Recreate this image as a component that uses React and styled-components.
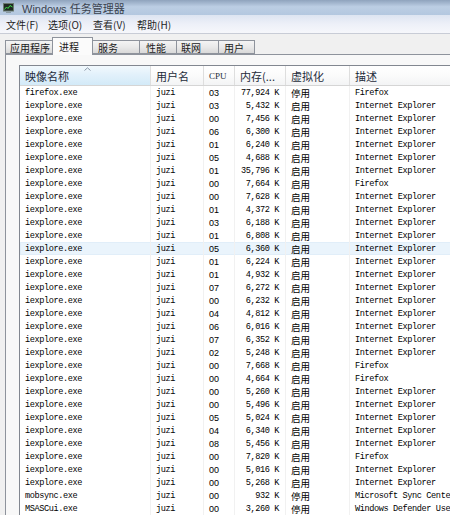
import styled, { createGlobalStyle } from "styled-components"

const Global = createGlobalStyle`
  html, body { margin: 0; padding: 0; overflow: hidden; background: #f0f0f0; }
`

const COLS = "131px 53px 31px 51px 64px 170px"

const Ventana = styled.div`
  width: 450px;
  height: 515px;
  overflow: hidden;
  background: #f0f0f0;
  display: flex;
  flex-direction: column;
  font-family: "Liberation Sans", "Noto Sans CJK SC", sans-serif;
`

const TitleBar = styled.div`
  height: 15px;
  flex: none;
  display: flex;
  align-items: center;
  gap: 8px;
  padding-left: 3px;
  background: linear-gradient(180deg, #8fa3bd 0%, #bccee4 45%, #b3c7df 100%);
`

const Titulo = styled.span`
  font-size: 11px;
  color: #3a424e;
  white-space: nowrap;
  font-family: "Liberation Sans", "Noto Sans CJK SC", sans-serif;
`

const MenuBar = styled.div`
  height: 18px;
  flex: none;
  display: flex;
  align-items: center;
  padding-left: 6px;
  background: linear-gradient(180deg, #dde4f1 0%, #edf0f8 50%, #f6f7fb 100%);
  border-bottom: 1px solid #c8ccd6;
`

const MenuItem = styled.span`
  width: ${p => p.w}px;
  flex: none;
  white-space: nowrap;
  font-size: 10px;
  color: #1e1e1e;
  font-family: "Noto Sans CJK SC", sans-serif;
`

const TabStrip = styled.div`
  height: 20px;
  flex: none;
  display: flex;
  align-items: flex-end;
  padding-left: 6px;
  position: relative;
  z-index: 1;
`

const Tab = styled.div`
  width: ${p => p.w}px;
  height: ${p => (p.sel ? 18 : 14)}px;
  margin-bottom: ${p => (p.sel ? -1 : 0)}px;
  box-sizing: border-box;
  padding-left: ${p => p.pl}px;
  display: flex;
  align-items: center;
  white-space: nowrap;
  overflow: hidden;
  font-size: 10px;
  font-family: "Noto Sans CJK SC", sans-serif;
  color: #1a1a1a;
  border: 1px solid #8e939c;
  border-bottom: ${p => (p.sel ? "none" : "1px solid #8e939c")};
  margin-left: -1px;
  background: ${p =>
    p.sel ? "#fbfbfb" : "linear-gradient(180deg, #f4f4f4 0%, #e9e9e9 50%, #d9d9d9 100%)"};
`

const Panel = styled.div`
  flex: 1;
  margin-left: 5px;
  border-top: 1px solid #8e939c;
  border-left: 1px solid #8e939c;
  background: #f8f8f8;
  padding: 10px 0 0 13px;
  overflow: hidden;
`

const Lista = styled.div`
  background: #ffffff;
  border-left: 1px solid #828790;
  border-top: 1px solid #828790;
  width: 520px;
  height: 600px;
`

const HeaderRow = styled.div`
  display: grid;
  grid-template-columns: ${COLS};
  height: 19px;
  border-bottom: 1px solid #d5d5d5;
`

const HeaderCell = styled.div`
  position: relative;
  display: flex;
  align-items: center;
  white-space: nowrap;
  justify-content: ${p => (p.right ? "flex-end" : "flex-start")};
  padding: ${p => (p.right ? "0 10px 0 0" : "0 0 0 5px")};
  font-size: ${p => (p.latin ? 9 : 11)}px;
  font-family: ${p =>
    p.latin ? `"Liberation Serif", serif` : `"Noto Sans CJK SC", sans-serif`};
  color: #1e2b3a;
  border-right: 1px solid #dedede;
  background: ${p =>
    p.sorted
      ? "linear-gradient(180deg, #f2f9fd 0%, #e2f1fb 45%, #d3eaf8 100%)"
      : "linear-gradient(180deg, #ffffff 0%, #fbfbfb 50%, #f3f4f5 100%)"};
`

const SortArrow = styled.svg`
  position: absolute;
  left: 64px;
  top: 1px;
`

const Row = styled.div`
  display: grid;
  grid-template-columns: ${COLS};
  height: 13px;
  background: ${p => (p.hot ? "#eaf4fc" : "#ffffff")};
  box-shadow: ${p => (p.hot ? "inset 0 0 0 1px #e1eef9" : "none")};
`

const Cell = styled.div`
  display: flex;
  align-items: center;
  overflow: hidden;
  white-space: nowrap;
  justify-content: ${p => (p.right ? "flex-end" : "flex-start")};
  padding: ${p => (p.right ? "0 6px 0 0" : "0 0 0 5px")};
  font-size: ${p => (p.cjk ? 9.5 : p.sans ? 9 : 8.6)}px;
  letter-spacing: ${p => (p.cjk || p.sans ? 0 : -0.4)}px;
  font-family: ${p =>
    p.cjk
      ? `"Noto Sans CJK SC", sans-serif`
      : p.sans
      ? `"Liberation Sans", sans-serif`
      : `"Liberation Mono", monospace`};
  color: #000;
  border-right: 1px solid #f1f1f1;
`

const IE = "Internet Explorer"
const FF = "Firefox"

const datos = [
  ["firefox.exe", "03", "77,924 K", "停用", FF],
  ["iexplore.exe", "03", "5,432 K", "启用", IE],
  ["iexplore.exe", "00", "7,456 K", "启用", IE],
  ["iexplore.exe", "06", "6,300 K", "启用", IE],
  ["iexplore.exe", "01", "6,240 K", "启用", IE],
  ["iexplore.exe", "05", "4,688 K", "启用", IE],
  ["iexplore.exe", "01", "35,796 K", "启用", IE],
  ["iexplore.exe", "00", "7,664 K", "启用", FF],
  ["iexplore.exe", "00", "7,628 K", "启用", IE],
  ["iexplore.exe", "01", "4,372 K", "启用", IE],
  ["iexplore.exe", "03", "6,188 K", "启用", IE],
  ["iexplore.exe", "01", "6,808 K", "启用", IE],
  ["iexplore.exe", "05", "6,360 K", "启用", IE],
  ["iexplore.exe", "01", "6,224 K", "启用", IE],
  ["iexplore.exe", "01", "4,932 K", "启用", IE],
  ["iexplore.exe", "07", "6,272 K", "启用", IE],
  ["iexplore.exe", "00", "6,232 K", "启用", IE],
  ["iexplore.exe", "04", "4,812 K", "启用", IE],
  ["iexplore.exe", "06", "6,016 K", "启用", IE],
  ["iexplore.exe", "07", "6,352 K", "启用", IE],
  ["iexplore.exe", "02", "5,248 K", "启用", IE],
  ["iexplore.exe", "00", "7,668 K", "启用", FF],
  ["iexplore.exe", "00", "4,664 K", "启用", FF],
  ["iexplore.exe", "00", "5,260 K", "启用", IE],
  ["iexplore.exe", "00", "5,496 K", "启用", IE],
  ["iexplore.exe", "05", "5,024 K", "启用", IE],
  ["iexplore.exe", "04", "6,340 K", "启用", IE],
  ["iexplore.exe", "08", "5,456 K", "启用", IE],
  ["iexplore.exe", "00", "7,820 K", "启用", FF],
  ["iexplore.exe", "00", "5,016 K", "启用", IE],
  ["iexplore.exe", "00", "5,268 K", "启用", IE],
  ["mobsync.exe", "00", "932 K", "停用", "Microsoft Sync Center"],
  ["MSASCui.exe", "00", "3,260 K", "停用", "Windows Defender User Interface"],
]

const menus = [
  ["文件(F)", 42],
  ["选项(O)", 45],
  ["查看(V)", 44],
  ["帮助(H)", 40],
]

const tabs = [
  ["应用程序", 48, 4, false],
  ["进程", 41, 6, true],
  ["服务", 48, 5, false],
  ["性能", 38, 6, false],
  ["联网", 43, 4, false],
  ["用户", 37, 5, false],
]

function Icono() {
  return (
    <svg width="11" height="10" viewBox="0 0 11 10">
      <rect x="0.5" y="0.5" width="10" height="7.5" fill="#1f2a22" stroke="#6b7a70" />
      <polyline points="1.5,6.5 3.5,4 5,5.5 7,2.5 9.5,4" fill="none" stroke="#3ddc4a" strokeWidth="1" />
      <rect x="3" y="8.5" width="5" height="1.5" fill="#8a9aa4" />
    </svg>
  )
}

function App() {
  return (
    <>
      <Global />
      <Ventana>
        <TitleBar>
          <Icono />
          <Titulo>Windows 任务管理器</Titulo>
        </TitleBar>
        <MenuBar>
          {menus.map(([t, w]) => (
            <MenuItem key={t} w={w}>{t}</MenuItem>
          ))}
        </MenuBar>
        <TabStrip>
          {tabs.map(([t, w, pl, sel]) => (
            <Tab key={t} w={w} pl={pl} sel={sel}>{t}</Tab>
          ))}
        </TabStrip>
        <Panel>
          <Lista>
            <HeaderRow>
              <HeaderCell sorted>
                映像名称
                <SortArrow width="7" height="4" viewBox="0 0 7 4">
                  <polyline points="0.5,3.5 3.5,0.8 6.5,3.5" fill="none" stroke="#8a98a8" strokeWidth="1" />
                </SortArrow>
              </HeaderCell>
              <HeaderCell>用户名</HeaderCell>
              <HeaderCell latin>CPU</HeaderCell>
              <HeaderCell right>内存(...</HeaderCell>
              <HeaderCell>虚拟化</HeaderCell>
              <HeaderCell>描述</HeaderCell>
            </HeaderRow>
            {datos.map((d, i) => (
              <Row key={i} hot={i === 12}>
                <Cell>{d[0]}</Cell>
                <Cell>juzi</Cell>
                <Cell sans>{d[1]}</Cell>
                <Cell right>{d[2]}</Cell>
                <Cell cjk>{d[3]}</Cell>
                <Cell>{d[4]}</Cell>
              </Row>
            ))}
          </Lista>
        </Panel>
      </Ventana>
    </>
  )
}

export default App
